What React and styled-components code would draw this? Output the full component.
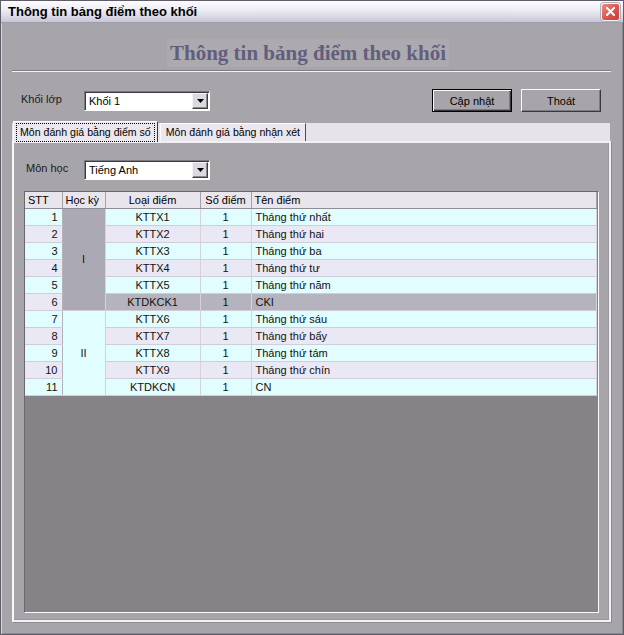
import React from 'react';
import styled, { createGlobalStyle, css } from 'styled-components';

const GlobalStyle = createGlobalStyle`
  html, body {
    margin: 0;
    padding: 0;
    background: #a7a5a9;
  }
  body {
    font-family: "Liberation Sans", Arial, sans-serif;
    font-size: 11px;
    color: #000;
  }
`;

const rows = [
  { stt: 1, loai: 'KTTX1', ten: 'Tháng thứ nhất' },
  { stt: 2, loai: 'KTTX2', ten: 'Tháng thứ hai' },
  { stt: 3, loai: 'KTTX3', ten: 'Tháng thứ ba' },
  { stt: 4, loai: 'KTTX4', ten: 'Tháng thứ tư' },
  { stt: 5, loai: 'KTTX5', ten: 'Tháng thứ năm' },
  { stt: 6, loai: 'KTDKCK1', ten: 'CKI', selected: true },
  { stt: 7, loai: 'KTTX6', ten: 'Tháng thứ sáu' },
  { stt: 8, loai: 'KTTX7', ten: 'Tháng thứ bẩy' },
  { stt: 9, loai: 'KTTX8', ten: 'Tháng thứ tám' },
  { stt: 10, loai: 'KTTX9', ten: 'Tháng thứ chín' },
  { stt: 11, loai: 'KTDKCN', ten: 'CN' },
];

// hoc ky cells span several rows
const terms = {
  0: { label: 'I', span: 6, tone: 'term' },
  6: { label: 'II', span: 5, tone: 'cyan' },
};

const tones = {
  cyan: '#e2fdfd',
  lav: '#ebe8f6',
  sel: '#b5b3bd',
  term: '#aba9b3',
};

const Window = styled.div`
  width: 624px;
  height: 635px;
  box-sizing: border-box;
  display: flex;
  flex-direction: column;
  background: #a7a5a9;
  border: 1px solid #5e5c68;
  box-shadow: inset 1px 1px 0 #d6d4dc, inset -1px -1px 0 #8a8890;
`;

const TitleBar = styled.div`
  height: 21px;
  flex: none;
  display: flex;
  align-items: center;
  justify-content: space-between;
  padding: 0 3px 0 7px;
  background: linear-gradient(#fdfdff, #ecebf2 45%, #c8c6d6);
  border-bottom: 1px solid #9e9cac;
`;

const Caption = styled.span`
  font-family: "Liberation Sans", Arial, sans-serif;
  font-weight: bold;
  font-size: 13px;
  color: #000;
`;

const CloseBox = styled.span`
  width: 17px;
  height: 16px;
  display: flex;
  align-items: center;
  justify-content: center;
  border: 1px solid #f4f2f6;
  border-radius: 3px;
  background: linear-gradient(135deg, #f08a80, #d8504a 60%, #c84038);
  box-shadow: 0 0 0 1px #b0aeb8;
`;

const HeadingRow = styled.div`
  display: flex;
  justify-content: center;
  margin-top: 16px;
  padding-right: 8px;
`;

const Heading = styled.div`
  height: 28px;
  padding: 0 3px;
  display: flex;
  align-items: center;
  background: #acaaae;
  font-family: "Liberation Serif", "Times New Roman", serif;
  font-weight: bold;
  font-size: 21px;
  color: #625e7e;
`;

const Separator = styled.div`
  height: 1px;
  margin: 3px 12px 0 11px;
  background: #7e7c82;
  border-bottom: 1px solid #f4f4f6;
`;

const ControlRow = styled.div`
  height: 23px;
  margin-top: 17px;
  padding: 0 22px 0 20px;
  display: flex;
  align-items: center;
`;

const Label = styled.span`
  width: ${(p) => p.$w}px;
  margin-top: -4px;
  font-size: 11px;
  color: #1a1a1a;
`;

const ComboBox = styled.div`
  width: 126px;
  height: 20px;
  box-sizing: border-box;
  display: flex;
  align-items: center;
  background: #fff;
  border: 1px solid;
  border-color: #7c7a80 #fff #fff #7c7a80;
  box-shadow: inset 1px 1px 0 #3c3a40;
`;

const ComboText = styled.span`
  flex: 1;
  padding-left: 4px;
`;

const DropButton = styled.span`
  width: 16px;
  height: 16px;
  margin-right: 1px;
  box-sizing: border-box;
  display: flex;
  align-items: center;
  justify-content: center;
  background: #dcdade;
  border: 1px solid;
  border-color: #f4f4f6 #404040 #404040 #f4f4f6;
  box-shadow: inset -1px -1px 0 #8c8a90;
`;

const Spacer = styled.div`
  flex: 1;
`;

const Button = styled.button`
  width: 80px;
  height: 23px;
  box-sizing: border-box;
  margin-left: ${(p) => p.$gap || 0}px;
  padding: 0;
  font-family: "Liberation Sans", Arial, sans-serif;
  font-size: 11px;
  color: #000;
  background: #a7a5a9;
  border: 1px solid;
  border-color: #fbfbfd #3a383e #3a383e #fbfbfd;
  box-shadow: inset -1px -1px 0 #7e7c82;
  ${(p) =>
    p.$primary &&
    css`
      border-color: #000;
      box-shadow: inset 1px 1px 0 #fbfbfd, inset -1px -1px 0 #3a383e,
        inset -2px -2px 0 #7e7c82;
    `}
`;

const TabStrip = styled.div`
  height: 20px;
  margin: 9px 13px 0 11px;
  display: flex;
  align-items: flex-end;
  background: linear-gradient(to bottom, transparent 2px, #e7e3eb 2px);
  position: relative;
  z-index: 1;
`;

const Tab = styled.div`
  height: 18px;
  box-sizing: border-box;
  display: flex;
  align-items: center;
  margin-left: 2px;
  padding: 0 3px;
  background: #ebe7ef;
  border-top: 1px solid #fcfcfe;
  border-left: 1px solid #fcfcfe;
  border-right: 1px solid #4e4c54;
  font-size: 10.6px;
  ${(p) =>
    p.$active &&
    css`
      height: 21px;
      margin-bottom: -1px;
      margin-left: 1px;
      padding: 0 3px;
      border-right-color: #3a3840;
    `}
`;

const TabLabel = styled.span`
  padding: 1px 2px 2px;
  ${(p) =>
    p.$focus &&
    css`
      outline: 1px dotted #000;
      outline-offset: 0;
      padding: 2px 3px 3px;
    `}
`;

const Panel = styled.div`
  flex: 1;
  margin: 0 12px 12px 11px;
  display: flex;
  flex-direction: column;
  border: 2px solid;
  border-color: #f2f0f4 #f4f2f6 #f4f2f6 #fafafc;
  box-shadow: 1px 1px 0 #8c8a90, inset -1px -1px 0 #9a989e;
`;

const PanelRow = styled.div`
  height: 20px;
  margin-top: 17px;
  padding-left: 12px;
  display: flex;
  align-items: center;
`;

const GridView = styled.div`
  flex: 1;
  margin: 11px 10px 7px 10px;
  background: #868387;
  border: 1px solid;
  border-color: #6a686e #fbfbfd #fbfbfd #6a686e;
`;

const Table = styled.table`
  border-collapse: collapse;
  table-layout: fixed;
  width: 572px;
  font-size: 11px;
`;

const HeadCell = styled.th`
  width: ${(p) => p.$w}px;
  height: 16px;
  padding: 0 3px;
  box-sizing: border-box;
  font-weight: normal;
  text-align: ${(p) => p.$align || 'left'};
  background: #e9e5ed;
  border-right: 1px solid #a4a2aa;
  border-bottom: 1px solid #8e8c94;
  white-space: nowrap;
`;

const Cell = styled.td`
  height: 16px;
  padding: 0 4px;
  text-align: ${(p) => p.$align || 'left'};
  vertical-align: middle;
  background: ${(p) => tones[p.$tone]};
  border-right: 1px solid ${(p) => (p.$strong ? '#b2b0b8' : '#d4d2da')};
  border-bottom: 1px solid #cfcdd6;
  white-space: nowrap;
  color: #111;
`;

function Triangle() {
  return (
    <svg width="7" height="4" viewBox="0 0 7 4">
      <polygon points="0,0 7,0 3.5,4" fill="#000" />
    </svg>
  );
}

function Combo({ value }) {
  return (
    <ComboBox>
      <ComboText>{value}</ComboText>
      <DropButton>
        <Triangle />
      </DropButton>
    </ComboBox>
  );
}

function CloseIcon() {
  return (
    <svg width="9" height="9" viewBox="0 0 9 9">
      <path d="M1 1 L8 8 M8 1 L1 8" stroke="#fff" strokeWidth="2" strokeLinecap="square" />
    </svg>
  );
}

export default function App() {
  return (
    <>
      <GlobalStyle />
      <Window>
        <TitleBar>
          <Caption>Thông tin bảng điểm theo khối</Caption>
          <CloseBox>
            <CloseIcon />
          </CloseBox>
        </TitleBar>

        <HeadingRow>
          <Heading>Thông tin bảng điểm theo khối</Heading>
        </HeadingRow>
        <Separator />

        <ControlRow>
          <Label $w={63}>Khối lớp</Label>
          <Combo value="Khối 1" />
          <Spacer />
          <Button $primary>Cập nhật</Button>
          <Button $gap={9}>Thoát</Button>
        </ControlRow>

        <TabStrip>
          <Tab $active>
            <TabLabel $focus>Môn đánh giá bằng điểm số</TabLabel>
          </Tab>
          <Tab>
            <TabLabel>Môn đánh giá bằng nhận xét</TabLabel>
          </Tab>
        </TabStrip>

        <Panel>
          <PanelRow>
            <Label $w={58}>Môn học</Label>
            <Combo value="Tiếng Anh" />
          </PanelRow>
          <GridView>
            <Table>
              <thead>
                <tr>
                  <HeadCell $w={37}>STT</HeadCell>
                  <HeadCell $w={43}>Học kỳ</HeadCell>
                  <HeadCell $w={95} $align="center">Loại điểm</HeadCell>
                  <HeadCell $w={51} $align="center">Số điểm</HeadCell>
                  <HeadCell>Tên điểm</HeadCell>
                </tr>
              </thead>
              <tbody>
                {rows.map((r, i) => {
                  const tone = i % 2 === 0 ? 'cyan' : 'lav';
                  const rest = r.selected ? 'sel' : tone;
                  const term = terms[i];
                  return (
                    <tr key={r.stt}>
                      <Cell $align="right" $tone={tone} $strong>
                        {r.stt}
                      </Cell>
                      {term && (
                        <Cell rowSpan={term.span} $align="center" $tone={term.tone}>
                          {term.label}
                        </Cell>
                      )}
                      <Cell $align="center" $tone={rest}>
                        {r.loai}
                      </Cell>
                      <Cell $align="center" $tone={rest}>
                        1
                      </Cell>
                      <Cell $tone={rest}>{r.ten}</Cell>
                    </tr>
                  );
                })}
              </tbody>
            </Table>
          </GridView>
        </Panel>
      </Window>
    </>
  );
}
